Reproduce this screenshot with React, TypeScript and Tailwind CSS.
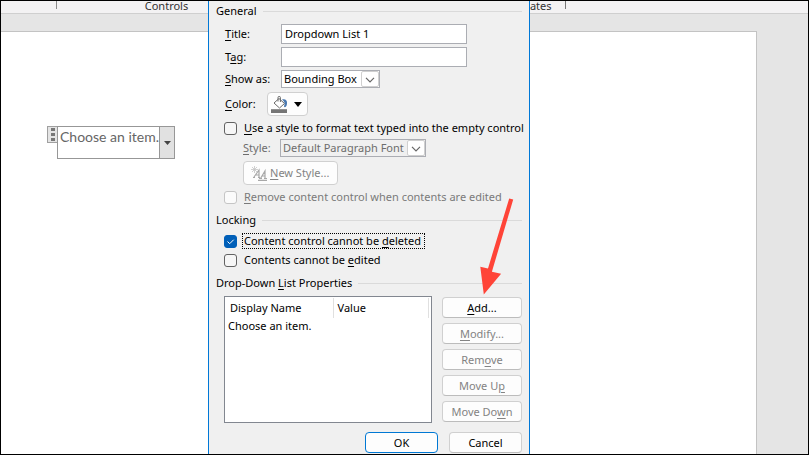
import React from 'react'
import clsx from 'clsx'

function Heading({ children, className }: { children: React.ReactNode; className?: string }) {
  return (
    <div className={clsx('flex h-5 items-center gap-[6px]', className)}>
      <h2>{children}</h2>
      <div className="h-px flex-1 bg-[#dadada]" />
    </div>
  )
}

type CheckProps = {
  id: string
  children: React.ReactNode
  defaultChecked?: boolean
  disabled?: boolean
  focused?: boolean
  className?: string
}

function Check({ id, children, defaultChecked, disabled, focused, className }: CheckProps) {
  return (
    <div className={clsx('flex h-[18px] items-center gap-[5px] pl-2', className)}>
      <span className="grid size-[13px] shrink-0">
        <input
          id={id}
          type="checkbox"
          defaultChecked={defaultChecked}
          disabled={disabled}
          className="peer col-start-1 row-start-1 size-[13px] appearance-none rounded-[3px] border border-[#626262] bg-[#f6f6f6] checked:border-[#005fb8] checked:bg-[#005fb8] disabled:border-[#c5c5c5] disabled:bg-[#fbfbfb]"
        />
        <svg viewBox="0 0 13 13" className="pointer-events-none invisible col-start-1 row-start-1 size-[13px] peer-checked:visible">
          <path d="M3.5 6.5l2.2 2.2 4-4" fill="none" stroke="#fff" strokeWidth="1" />
        </svg>
      </span>
      <label
        htmlFor={id}
        className={clsx(
          'border border-dotted pr-[3px] pl-px leading-[14px] whitespace-nowrap',
          focused ? 'border-black' : 'border-transparent',
          disabled && 'text-[#7a7a7a]',
        )}
      >
        {children}
      </label>
    </div>
  )
}

type DropProps = { id: string; value: string; disabled?: boolean; className: string }

function Drop({ id, value, disabled, className }: DropProps) {
  return (
    <div className={clsx('relative', className)}>
      <select
        id={id}
        disabled={disabled}
        className="block h-[18px] w-full appearance-none border border-[#abadb3] bg-white pr-5 pl-[2px] leading-4 disabled:bg-[#f0f0f0] disabled:text-[#6d6d6d] disabled:opacity-100"
      >
        <option>{value}</option>
      </select>
      <span className="pointer-events-none absolute inset-y-px right-px flex w-[18px] items-center justify-center rounded-[2px] border border-[#d0d0d0] bg-white">
        <svg viewBox="0 0 10 6" className="mt-[2px] h-[6px] w-[10px]">
          <path d="M1 .8l4 4 4-4" fill="none" stroke="#666" strokeWidth="1.2" />
        </svg>
      </span>
    </div>
  )
}

function Button({ children, disabled, className }: { children: React.ReactNode; disabled?: boolean; className?: string }) {
  return (
    <button
      type="button"
      disabled={disabled}
      className={clsx(
        'h-[21px] rounded-[4px] border bg-[#fdfdfd] leading-[17px] whitespace-nowrap disabled:text-[#838383]',
        className || 'border-[#d0d0d0] border-b-[#bcbcbc]',
      )}
    >
      {children}
    </button>
  )
}

function BucketIcon() {
  return (
    <svg viewBox="0 0 17 17" className="h-[17px] w-[17px]">
      <path d="M11 3.500c3.500-.8 5.500 1 5 4-.2 2-.8 3.500-2 3.800-1 0-1.300-1-.6-2.300.8-1.500.1-3.500-2.400-5.500z" fill="#4a79b0" />
      <path d="M8 2.500l5.500 5-5 4.500L3 7z" fill="#fff" stroke="#6a6a6a" />
      <path d="M7 5.500V1.600a1.200 1.200 0 0 1 2.400 0V6" fill="none" stroke="#6a6a6a" />
      <path d="M0 13.200h16V17H0z" fill="#757575" />
    </svg>
  )
}

function NewStyleIcon() {
  return (
    <svg viewBox="0 0 16 15" className="h-[15px] w-[16px]">
      <path d="M3.500 0v7M0 3.500h7M1 1l5 5M6 1L1 6" stroke="#c4c4c4" strokeWidth=".8" />
      <path d="M3 11L8 4v7M5 9h3M2 11.500h2M7 11.500h2" fill="none" stroke="#a8a8a8" strokeWidth="1.200" />
      <path d="M9.500 12.500L14 5v7.500M11 10h3M8 12.500h3M13 12.500h3M7 14.400h9" fill="none" stroke="#a8a8a8" strokeWidth="1.200" />
    </svg>
  )
}

function Ribbon() {
  return (
    <div className="flex h-[13px] border-b border-[#cfcfcf] bg-[#f3f2f3] text-[11px] leading-[9px] text-[#333]">
      <div className="h-2 w-14 border-r border-[#8a8a8a]" />
      <div className="w-[219px] text-center">Controls</div>
      <div className="w-[213px]" />
      <div className="h-2 w-[77px] border-r border-[#777] pr-1 text-center">Templates</div>
    </div>
  )
}

function ContentControl() {
  return (
    <div className="flex items-start">
      <div className="flex h-[17px] w-[10px] flex-col items-center justify-center gap-[2px] border border-r-0 border-[#a0a0a0] bg-[#e4e4e4]">
        <i className="h-[3px] w-1 bg-[#777]" />
        <i className="h-[3px] w-1 bg-[#777]" />
        <i className="h-[3px] w-1 bg-[#777]" />
      </div>
      <div className="flex h-[33px] border border-[#979797]">
        <p className="w-[101px] pl-[2px] font-['Lato',sans-serif] text-[14px] leading-[19px] whitespace-nowrap text-[#666]">Choose an item.</p>
        <button type="button" aria-label="Open list" className="flex w-[15px] items-center justify-center border-l border-[#979797] bg-[#e1e1e1]">
          <svg viewBox="0 0 7 4" className="h-1 w-[7px]"><path d="M0 0h7L3.500 4z" fill="#444" /></svg>
        </button>
      </div>
    </div>
  )
}

function Dialog() {
  return (
    <div
      role="dialog"
      aria-label="Content Control Properties"
      className="absolute inset-y-0 left-[207px] w-[322px] overflow-hidden border-x border-[#0078d7] bg-[#f0f0f0] px-[7px] text-[11px] leading-[14px] text-black [&_u]:underline-offset-2"
    >
      <Heading>General</Heading>
      <div className="mt-[3px] flex flex-col gap-[3px] pl-[9px]">
        <div className="flex items-center">
          <label htmlFor="title" className="w-14"><u>T</u>itle:</label>
          <input id="title" defaultValue="Dropdown List 1" className="h-5 w-[186px] border border-[#abadb3] bg-white px-[3px] pb-px" />
        </div>
        <div className="flex items-center">
          <label htmlFor="tag" className="w-14">T<u>a</u>g:</label>
          <input id="tag" className="h-5 w-[186px] border border-[#abadb3] bg-white px-[3px] pb-px" />
        </div>
        <div className="flex items-center">
          <label htmlFor="show" className="w-14 whitespace-nowrap"><u>S</u>how as:</label>
          <Drop id="show" value="Bounding Box" className="w-[99px]" />
        </div>
        <div className="mt-px flex items-center">
          <label htmlFor="color" className="w-[42px]"><u>C</u>olor:</label>
          <button id="color" type="button" className="flex h-6 w-[41px] items-center gap-[6px] rounded-[4px] border border-[#d0d0d0] bg-[#fdfdfd] pl-[3px]">
            <BucketIcon />
            <svg viewBox="0 0 8 5" className="h-[5px] w-2"><path d="M0 0h8L4 5z" /></svg>
          </button>
        </div>
      </div>
      <Check id="use-style" className="mt-[3px]"><u>U</u>se a style to format text typed into the empty control</Check>
      <div className="mt-[2px] pl-[27px] text-[#6d6d6d]">
        <div className="flex items-center">
          <label htmlFor="style" className="w-[37px]"><u>S</u>tyle:</label>
          <Drop id="style" value="Default Paragraph Font" disabled className="w-[146px]" />
        </div>
        <button type="button" disabled className="mt-1 flex h-6 w-[95px] items-center gap-[3px] rounded-[4px] border border-[#d0d0d0] bg-[#fdfdfd] pl-[7px] whitespace-nowrap text-[#838383]">
          <NewStyleIcon />
          <span><u>N</u>ew Style...</span>
        </button>
      </div>
      <Check id="remove" disabled className="mt-[3px]"><u>R</u>emove content control when contents are edited</Check>

      <Heading className="mt-1">Locking</Heading>
      <Check id="no-delete" defaultChecked focused className="mt-[2px]">Content control cannot be <u>d</u>eleted</Check>
      <Check id="no-edit" className="mt-px">Contents cannot be <u>e</u>dited</Check>

      <Heading className="mt-1">Drop-Down <u>L</u>ist Properties</Heading>
      <div className="mt-[3px] flex gap-[10px] pl-2">
        <div className="h-[127px] flex-1 border border-[#828790] bg-white pt-px pr-[2px]">
          <table className="w-full table-fixed border-collapse text-left">
            <thead>
              <tr className="h-5">
                <th className="w-[108px] border-r border-[#e0e0e0] pl-[5px] font-normal">Display Name</th>
                <th className="border-r border-[#e0e0e0] pl-1 font-normal">Value</th>
              </tr>
            </thead>
            <tbody>
              <tr className="h-4">
                <td className="pl-[3px]">Choose an item.</td>
                <td />
              </tr>
            </tbody>
          </table>
        </div>
        <div className="flex w-20 flex-col gap-[5px] pt-px">
          <Button><u>A</u>dd...</Button>
          <Button disabled><u>M</u>odify...</Button>
          <Button disabled>Rem<u>o</u>ve</Button>
          <Button disabled>Move U<u>p</u></Button>
          <Button disabled>Move Do<u>w</u>n</Button>
        </div>
      </div>
      <div className="mt-[9px] grid grid-cols-[73px_73px] justify-end gap-[11px]">
        <Button className="border-[#0078d4]">OK</Button>
        <Button>Cancel</Button>
      </div>
    </div>
  )
}

export default function App() {
  return (
    <div className="relative flex h-screen flex-col overflow-hidden border border-black bg-[#e5e5e5] font-['Noto_Sans',sans-serif]">
      <Ribbon />
      <main className="mt-[17px] mr-[51px] flex-1 border-t border-r border-[#c3c3c3] bg-white pt-[94px] pl-[46px]">
        <ContentControl />
      </main>
      <Dialog />
      <svg viewBox="0 0 34 98" className="pointer-events-none absolute top-[197px] left-[479px] h-[98px] w-[34px]">
        <path d="M29.200 .5l4 1-21.300 72.300 9.200 1.900L3.800 96.500.3 68.700l7.700 1.700z" fill="#ff4438" />
      </svg>
    </div>
  )
}
